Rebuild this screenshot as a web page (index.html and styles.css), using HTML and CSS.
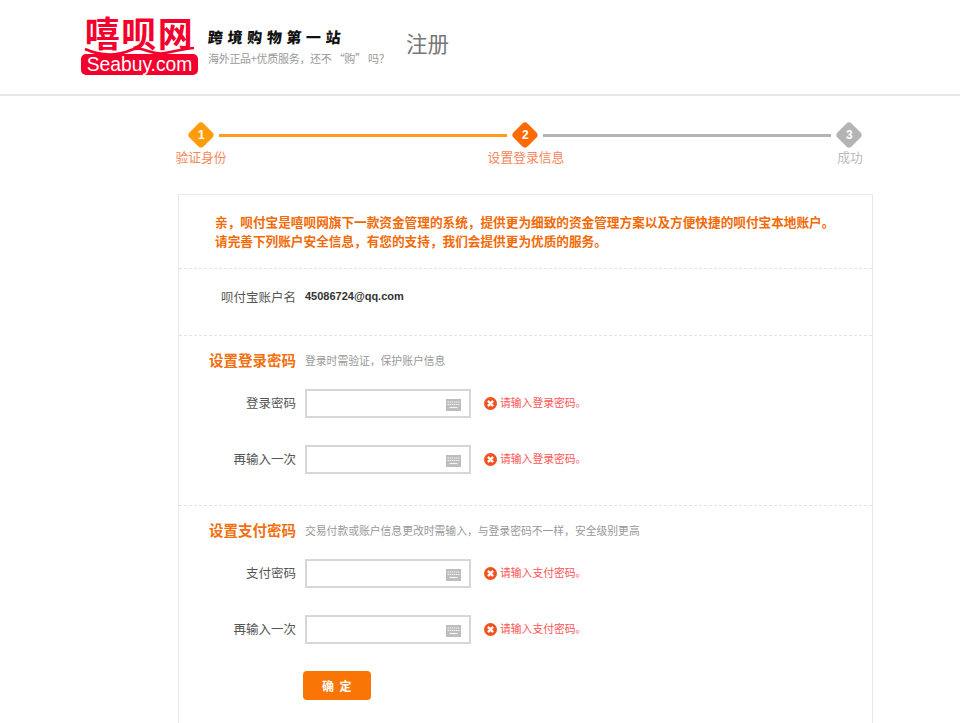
FILE: index.html
```html
<!DOCTYPE html>
<html lang="zh-CN">
<head>
<meta charset="utf-8">
<title>注册</title>
<link rel="stylesheet" href="styles.css">
</head>
<body>
<header class="topbar">
  <div class="logo">
    <div class="logo-cn">嘻呗网</div>
    <svg class="logo-swoosh" width="117" height="12" viewBox="0 0 117 12"><path d="M4 4 C22 12 36 11 50 5 C62 0 70 11 84 8 C96 6 106 3 113 3" fill="none" stroke="#f5002d" stroke-width="2.5"/></svg>
    <div class="logo-en">Seabuy.com</div>
  </div>
  <div class="slogan">
    <div class="slogan-main">跨境购物第一站</div>
    <div class="slogan-sub">海外正品+优质服务，还不 “购” 吗？</div>
  </div>
  <div class="page-title">注册</div>
</header>

<div class="steps">
  <div class="step done">
    <span class="diamond"><b>1</b></span>
    <span class="step-label">验证身份</span>
  </div>
  <div class="step-line done"></div>
  <div class="step current">
    <span class="diamond"><b>2</b></span>
    <span class="step-label">设置登录信息</span>
  </div>
  <div class="step-line"></div>
  <div class="step">
    <span class="diamond"><b>3</b></span>
    <span class="step-label">成功</span>
  </div>
</div>

<main class="card">
  <section class="notice">
    <p>亲，呗付宝是嘻呗网旗下一款资金管理的系统，提供更为细致的资金管理方案以及方便快捷的呗付宝本地账户。</p>
    <p>请完善下列账户安全信息，有您的支持，我们会提供更为优质的服务。</p>
  </section>

  <section class="account">
    <span class="label">呗付宝账户名</span>
    <span class="account-value">45086724@qq.com</span>
  </section>

  <section class="block">
    <div class="block-head">
      <h2>设置登录密码</h2>
      <span class="hint">登录时需验证，保护账户信息</span>
    </div>
    <div class="row">
      <span class="label">登录密码</span>
      <div class="field"><svg class="kbd" width="15" height="12" viewBox="0 0 15 12"><rect width="15" height="12" fill="#bdbdbd"/><path d="M1.5 3h12M1.5 5.5h12" stroke="#f4f4f4" stroke-width="1" stroke-dasharray="1.5 .6"/><path d="M3.5 8.5h8" stroke="#f4f4f4" stroke-width="1.2"/></svg></div>
      <span class="err"><svg width="13" height="13" viewBox="0 0 13 13"><circle cx="6.5" cy="6.5" r="6.5" fill="#f4511e"/><path d="M3.9 3.9l5.2 5.2M9.1 3.9l-5.2 5.2" stroke="#fff" stroke-width="2.3"/></svg><span class="err-text">请输入登录密码。</span></span>
    </div>
    <div class="row">
      <span class="label">再输入一次</span>
      <div class="field"><svg class="kbd" width="15" height="12" viewBox="0 0 15 12"><rect width="15" height="12" fill="#bdbdbd"/><path d="M1.5 3h12M1.5 5.5h12" stroke="#f4f4f4" stroke-width="1" stroke-dasharray="1.5 .6"/><path d="M3.5 8.5h8" stroke="#f4f4f4" stroke-width="1.2"/></svg></div>
      <span class="err"><svg width="13" height="13" viewBox="0 0 13 13"><circle cx="6.5" cy="6.5" r="6.5" fill="#f4511e"/><path d="M3.9 3.9l5.2 5.2M9.1 3.9l-5.2 5.2" stroke="#fff" stroke-width="2.3"/></svg><span class="err-text">请输入登录密码。</span></span>
    </div>
  </section>

  <section class="block last">
    <div class="block-head">
      <h2>设置支付密码</h2>
      <span class="hint">交易付款或账户信息更改时需输入，与登录密码不一样，安全级别更高</span>
    </div>
    <div class="row">
      <span class="label">支付密码</span>
      <div class="field"><svg class="kbd" width="15" height="12" viewBox="0 0 15 12"><rect width="15" height="12" fill="#bdbdbd"/><path d="M1.5 3h12M1.5 5.5h12" stroke="#f4f4f4" stroke-width="1" stroke-dasharray="1.5 .6"/><path d="M3.5 8.5h8" stroke="#f4f4f4" stroke-width="1.2"/></svg></div>
      <span class="err"><svg width="13" height="13" viewBox="0 0 13 13"><circle cx="6.5" cy="6.5" r="6.5" fill="#f4511e"/><path d="M3.9 3.9l5.2 5.2M9.1 3.9l-5.2 5.2" stroke="#fff" stroke-width="2.3"/></svg><span class="err-text">请输入支付密码。</span></span>
    </div>
    <div class="row">
      <span class="label">再输入一次</span>
      <div class="field"><svg class="kbd" width="15" height="12" viewBox="0 0 15 12"><rect width="15" height="12" fill="#bdbdbd"/><path d="M1.5 3h12M1.5 5.5h12" stroke="#f4f4f4" stroke-width="1" stroke-dasharray="1.5 .6"/><path d="M3.5 8.5h8" stroke="#f4f4f4" stroke-width="1.2"/></svg></div>
      <span class="err"><svg width="13" height="13" viewBox="0 0 13 13"><circle cx="6.5" cy="6.5" r="6.5" fill="#f4511e"/><path d="M3.9 3.9l5.2 5.2M9.1 3.9l-5.2 5.2" stroke="#fff" stroke-width="2.3"/></svg><span class="err-text">请输入支付密码。</span></span>
    </div>
    <button class="submit" type="button">确 定</button>
  </section>
</main>
</body>
</html>
```

FILE: styles.css
```css
* { box-sizing: border-box; }
html, body { margin: 0; padding: 0; height: 723px; overflow: hidden; background: #fff; }
body { font-family: "Noto Sans CJK SC", "Liberation Sans", sans-serif; color: #555; }

.topbar {
  height: 96px;
  border-bottom: 2px solid #e8e8e8;
  padding: 17px 0 0 81px;
  display: flex;
  align-items: flex-start;
}
.logo { position: relative; width: 117px; height: 58px; margin-right: 10px; }
.logo-cn {
  height: 37px;
  font-family: "Liberation Sans", "Noto Sans CJK SC", sans-serif;
  font-size: 35px;
  line-height: 36px;
  letter-spacing: 1.5px;
  font-weight: 700;
  color: #f5002d;
  text-align: center;
  white-space: nowrap;
}
.logo-swoosh { position: absolute; left: 0; top: 28px; }
.logo-en {
  height: 21px;
  background: #f5002d;
  border-radius: 5px;
  color: #fff;
  font: 400 19.3px/21px "Liberation Sans", sans-serif;
  text-align: center;
}
.slogan { width: 198px; padding-top: 9px; }
.slogan-main {
  font-size: 15px;
  line-height: 22px;
  font-weight: 900;
  color: #111;
  letter-spacing: 4.6px;
  transform: skewX(-4deg);
  transform-origin: left center;
  white-space: nowrap;
}
.slogan-sub { font-size: 11px; letter-spacing: -.3px; line-height: 18px; color: #999; margin-top: 1px; white-space: nowrap; }
.page-title { font-size: 21.5px; line-height: 30px; color: #777; padding-top: 11px; }

.steps { display: flex; margin: 24px 0 0 183px; height: 74px; }
.step { width: 36px; display: flex; flex-direction: column; align-items: center; }
.diamond {
  width: 20px;
  height: 20px;
  margin-top: 5px;
  border-radius: 4px;
  background: #b4b4b4;
  transform: rotate(45deg);
  display: flex;
  align-items: center;
  justify-content: center;
  flex: none;
}
.diamond b {
  transform: rotate(-45deg);
  color: #fff;
  font: 700 12px/1 "Liberation Sans", sans-serif;
}
.step.done .diamond { background: #ff9c0a; }
.step.current .diamond { background: #ff6a00; }
.step-label {
  margin-top: 4px;
  font-size: 12.8px;
  line-height: 16px;
  color: #bbb;
  white-space: nowrap;
}
.step:not(.done) .step-label { margin-left: 2px; }
.step.done .step-label, .step.current .step-label { color: #f8865a; }
.step-line { width: 288px; height: 3px; margin-top: 14px; background: #b4b4b4; }
.step-line.done { background: #ff9c1e; }

.card {
  width: 695px;
  margin-left: 178px;
  height: 560px;
  border: 1px solid #e8e8e8;
  border-bottom: 0;
}
.notice {
  height: 74px;
  padding: 17px 0 0 36px;
  border-bottom: 1px dashed #e4e4e4;
  font-size: 12.65px;
  line-height: 19px;
  font-weight: 700;
  color: #f26a06;
}
.notice p { margin: 0; white-space: nowrap; }
.label {
  width: 117px;
  text-align: right;
  font-size: 12.5px;
  color: #555;
  flex: none;
  white-space: nowrap;
}
.row .label { margin-bottom: 3px; }
.account {
  height: 67px;
  border-bottom: 1px dashed #e4e4e4;
  display: flex;
  align-items: center;
  padding-bottom: 12px;
}
.account-value { margin-left: 9px; font: 700 11px "Liberation Sans", sans-serif; color: #333; }
.block { height: 170px; border-bottom: 1px dashed #e4e4e4; padding-top: 13px; }
.block.last { border-bottom: 0; }
.block-head { display: flex; align-items: center; height: 22px; margin-bottom: 18px; }
.block-head h2 {
  width: 117px;
  margin: 0;
  padding-left: 30px;
  font-size: 14.5px;
  line-height: 22px;
  font-weight: 700;
  color: #f2700f;
  white-space: nowrap;
  flex: none;
}
.hint { margin-left: 9px; font-size: 10.8px; color: #999; white-space: nowrap; }
.row { display: flex; align-items: center; height: 30px; margin-bottom: 26px; }
.field {
  width: 166px;
  height: 29px;
  margin-left: 9px;
  align-self: flex-start;
  border: 2px solid #d6d6d6;
  background: #fff;
  display: flex;
  align-items: flex-end;
  justify-content: flex-end;
  padding: 0 8px 5px 0;
}
.kbd { display: block; }
.err {
  margin-left: 13px;
  margin-bottom: 1px;
  display: flex;
  align-items: center;
  gap: 3px;
  font-size: 10.8px;
  color: #f55;
  white-space: nowrap;
}
.err svg { flex: none; }
.err-text { margin-bottom: 3px; }
.submit {
  display: block;
  width: 68px;
  height: 29px;
  margin: 0 0 0 124px;
  border: 0;
  border-radius: 4px;
  background: #f97606;
  color: #fff;
  font: 700 12px/29px "Noto Sans CJK SC", sans-serif;
  letter-spacing: 1.5px;
  padding: 0 0 0 1px;
}
```
